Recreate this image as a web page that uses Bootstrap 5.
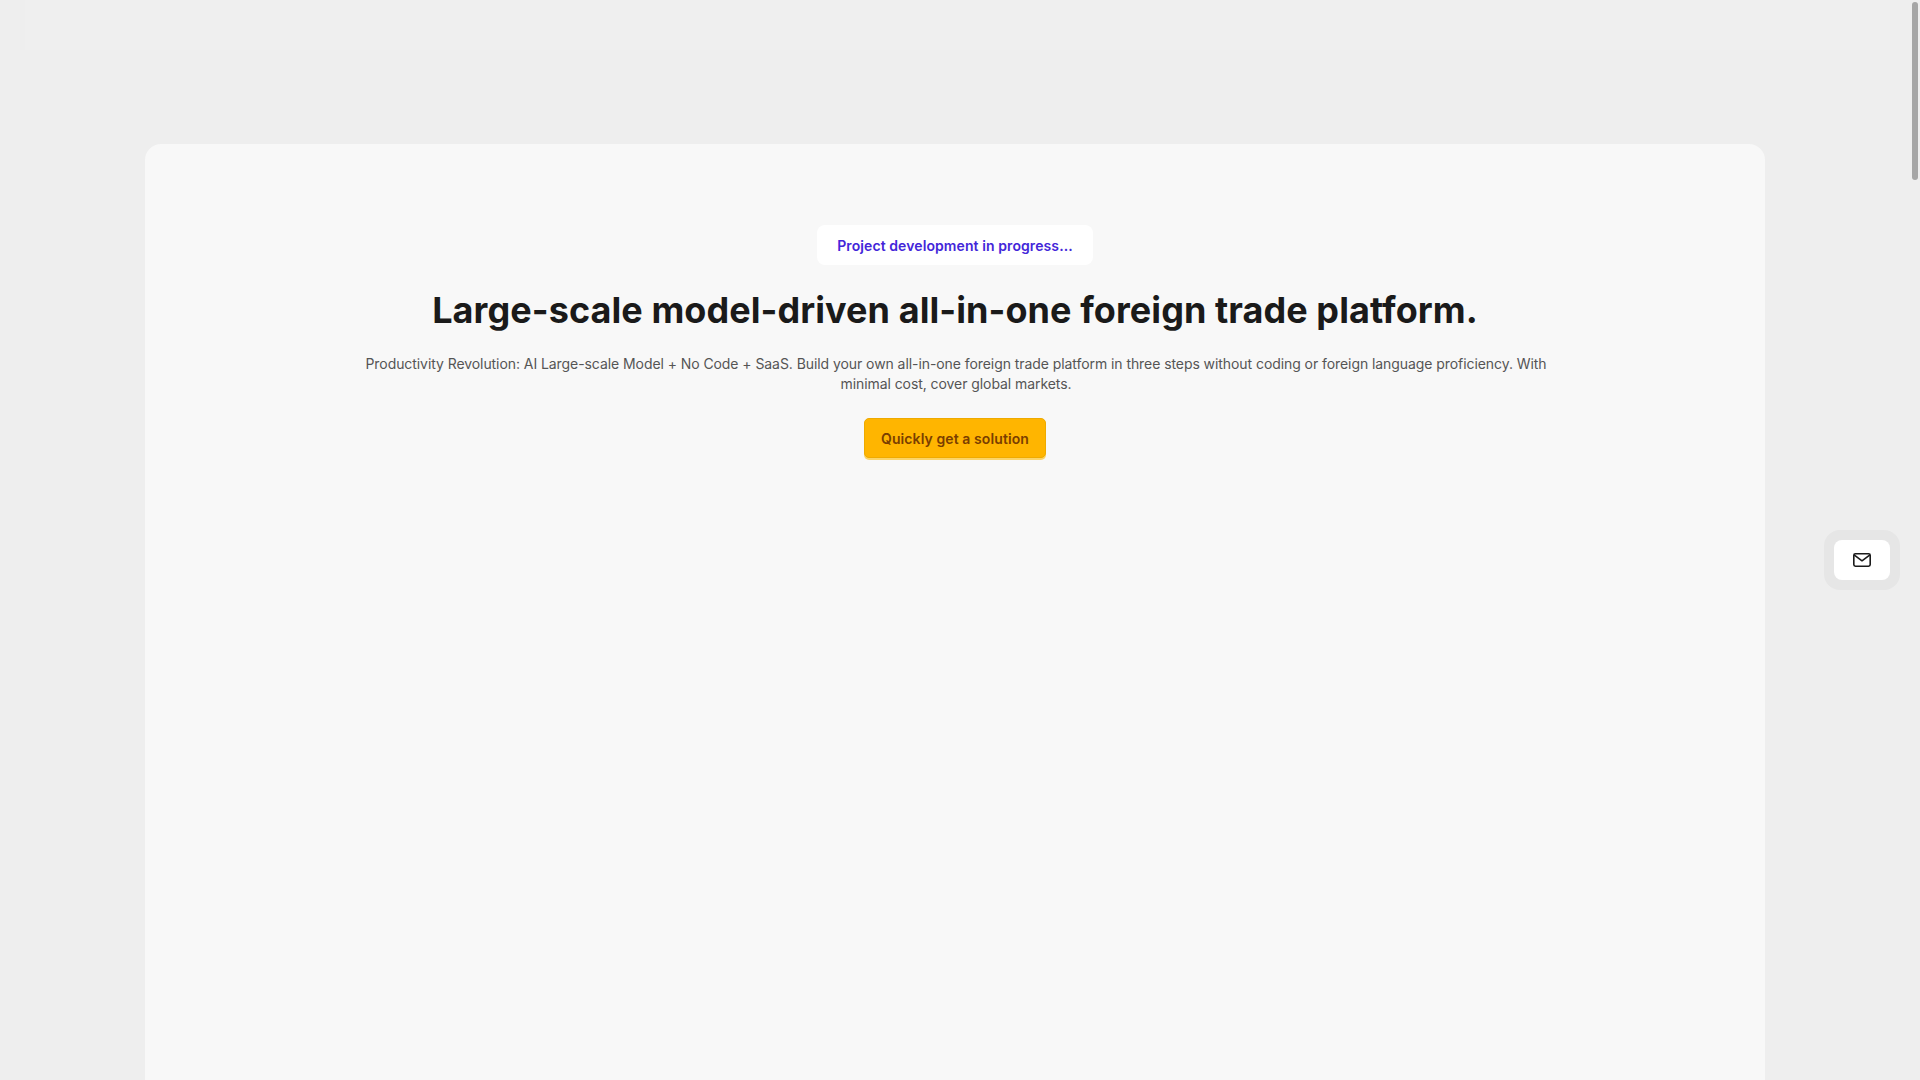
<!DOCTYPE html>
<html lang="en">
<head>
<meta charset="utf-8">
<title>Foreign trade platform</title>
<link rel="stylesheet" href="https://cdn.jsdelivr.net/npm/bootstrap@5.3.0/dist/css/bootstrap.min.css">
<style>
html,body{height:100%;overflow:hidden}
body{background:#eeeeee;font-family:Inter,"Liberation Sans",sans-serif;color:#1a1a1a}
.top-strip{height:50px;margin:0 30px 0 25px;background:#efefef}
.page-wrap{padding:94px 155px 0 145px;height:calc(100vh - 50px)}
.hero-panel{background:#f8f8f8;border-radius:16px;height:calc(100vh - 144px + 20px);padding-top:81px}
.status-pill{height:40px;width:276px;background:#fff;border-radius:8px;font-size:14px;font-weight:600;letter-spacing:.09px;color:#4326d9}
.hero-title{font-size:36px;font-weight:700;line-height:44px;letter-spacing:.07px;color:#1a1a1a;margin:23px 0 0}
.hero-text{width:1200px;padding-left:2px;font-size:14px;line-height:20px;letter-spacing:-.07px;color:#555;margin:22px 0 0}
.cta-btn{width:182px;height:40px;margin-top:24px;background:#ffb500;border:1px solid #eeaa00;box-shadow:0 2px 0 #fbd468;border-radius:5px;font-size:14px;font-weight:600;letter-spacing:.09px;color:#7a3e00;padding:0}
.cta-btn:hover{background:#ffb500;color:#7a3e00}
.mail-dock{position:fixed;left:1824px;top:530px;width:76px;height:60px;background:#e6e6e6;border-radius:16px}
.mail-tile{width:56px;height:40px;background:#fff;border-radius:8px}
.fake-thumb{position:fixed;left:1912px;top:2px;width:6px;height:178px;background:#a6a6a6;border-radius:3px}
</style>
</head>
<body>
<div class="top-strip"></div>
<div class="page-wrap">
  <main class="hero-panel d-flex flex-column align-items-center text-center">
    <div class="status-pill d-flex align-items-center justify-content-center">Project development in progress...</div>
    <h1 class="hero-title">Large-scale model-driven all-in-one foreign trade platform.</h1>
    <p class="hero-text">Productivity Revolution: AI Large-scale Model + No Code + SaaS. Build your own all-in-one foreign trade platform in three steps without coding or foreign language proficiency. With minimal cost, cover global markets.</p>
    <button type="button" class="btn cta-btn">Quickly get a solution</button>
  </main>
</div>
<div class="mail-dock d-flex align-items-center justify-content-center">
  <div class="mail-tile d-flex align-items-center justify-content-center">
    <svg width="20" height="20" viewBox="0 0 20 20" fill="none" stroke="#1a1a1a" stroke-width="1.6" stroke-linejoin="round" stroke-linecap="round"><rect x="1.8" y="3.8" width="16.4" height="12.4" rx="1.6"/><path d="M2.4 5.2 10 10.8 17.6 5.2"/></svg>
  </div>
</div>
<div class="fake-thumb"></div>
<script src="https://cdn.jsdelivr.net/npm/bootstrap@5.3.0/dist/js/bootstrap.bundle.min.js"></script>
</body>
</html>
